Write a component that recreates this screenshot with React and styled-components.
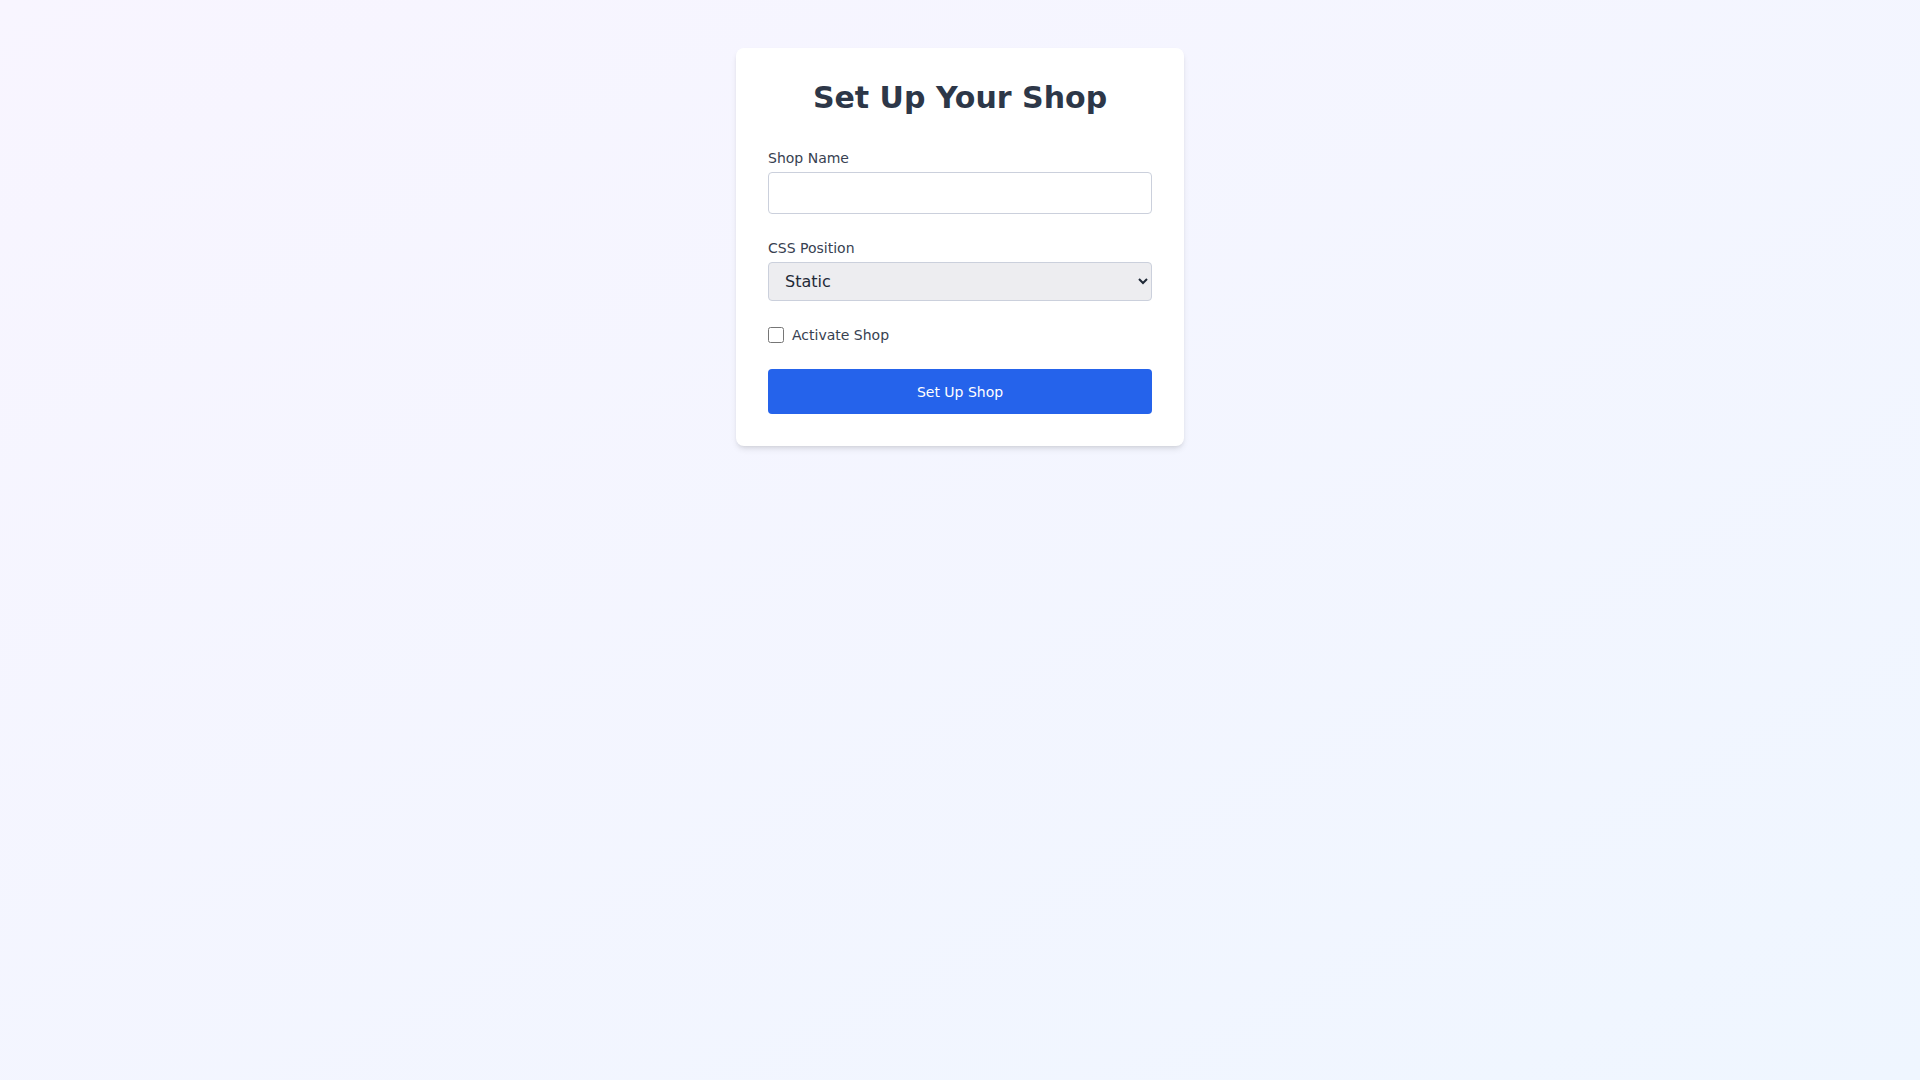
import { useState } from 'react';
import styled, { createGlobalStyle } from 'styled-components';

const GlobalStyle = createGlobalStyle`
  * {
    box-sizing: border-box;
  }
  body {
    margin: 0;
    font-family: "DejaVu Sans", sans-serif;
  }
`

const Page = styled.div`
  min-height: 100vh;
  background: linear-gradient(to bottom right, #f8f5ff, #eff6ff);
  display: flex;
  justify-content: center;
  align-items: flex-start;
  padding-top: 48px;
`

const Card = styled.form`
  width: 448px;
  background: #ffffff;
  border-radius: 8px;
  padding: 32px;
  box-shadow: 0 4px 6px -1px rgba(0, 0, 0, 0.1), 0 2px 4px -2px rgba(0, 0, 0, 0.1);
  display: flex;
  flex-direction: column;
`

const Title = styled.h1`
  margin: 0 0 32px;
  font-size: 30px;
  line-height: 36px;
  font-weight: 700;
  text-align: center;
  color: #2d3748;
`

const Field = styled.div`
  display: flex;
  flex-direction: column;
  margin-bottom: 24px;
`

const Label = styled.label`
  font-size: 14px;
  line-height: 20px;
  color: #374151;
  margin-bottom: 4px;
`

const Input = styled.input`
  height: 42px;
  width: 100%;
  padding: 8px 12px;
  border: 1px solid #cbd0dc;
  border-radius: 4px;
  font-family: inherit;
  font-size: 16px;
  color: #1f2937;
  outline: none;
  margin: 0;
`

const Select = styled.select`
  height: 39px;
  width: 100%;
  padding: 0 12px;
  border: 1px solid #cbd0dc;
  border-radius: 4px;
  background-color: #ededf0;
  font-family: inherit;
  font-size: 16px;
  color: #1f2937;
  margin: 0;
`

const CheckRow = styled.label`
  display: flex;
  align-items: center;
  gap: 8px;
  font-size: 14px;
  line-height: 20px;
  color: #374151;
  margin-bottom: 24px;
`

const Checkbox = styled.input`
  width: 16px;
  height: 16px;
  margin: 0;
`

const Button = styled.button`
  width: 100%;
  height: 45px;
  border: none;
  border-radius: 4px;
  background: #2563eb;
  color: #ffffff;
  font-family: inherit;
  font-size: 14px;
  cursor: pointer;
  &:hover {
    background: #1d4ed8;
  }
`

export default function App () {
  const [form, setForm] = useState({ name: '', position: 'static', active: false })

  return (
    <>
      <GlobalStyle />
      <Page>
        <Card onSubmit={e => e.preventDefault()}>
          <Title>Set Up Your Shop</Title>
          <Field>
            <Label htmlFor="shop-name">Shop Name</Label>
            <Input
              id="shop-name"
              value={form.name}
              onChange={e => setForm({ ...form, name: e.target.value })}
            />
          </Field>
          <Field>
            <Label htmlFor="css-position">CSS Position</Label>
            <Select
              id="css-position"
              value={form.position}
              onChange={e => setForm({ ...form, position: e.target.value })}
            >
              <option value="static">Static</option>
              <option value="relative">Relative</option>
              <option value="absolute">Absolute</option>
              <option value="fixed">Fixed</option>
              <option value="sticky">Sticky</option>
            </Select>
          </Field>
          <CheckRow>
            <Checkbox
              type="checkbox"
              checked={form.active}
              onChange={e => setForm({ ...form, active: e.target.checked })}
            />
            Activate Shop
          </CheckRow>
          <Button type="submit">Set Up Shop</Button>
        </Card>
      </Page>
    </>
  )
}
